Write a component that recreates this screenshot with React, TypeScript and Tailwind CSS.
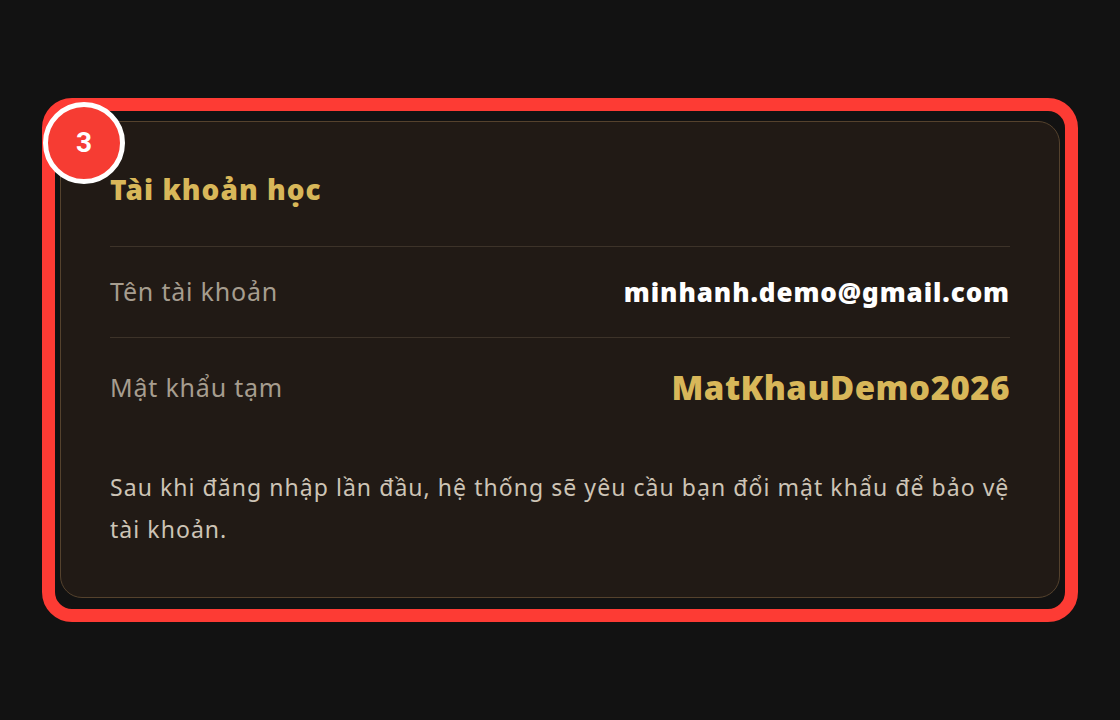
import React from "react";

const rows = [
  { label: "Tên tài khoản", value: "minhanh.demo@gmail.com", accent: false },
  { label: "Mật khẩu tạm", value: "MatKhauDemo2026", accent: true },
];

export default function App() {
  return (
    <div
      className="w-[1120px] h-[720px] bg-[#121212] flex items-center justify-center"
      style={{ fontFamily: '"Noto Sans", "Open Sans", sans-serif' }}
    >
      <div className="relative w-[1036px] h-[524px] rounded-[30px] border-[13px] border-[#fd3b34] px-[5px] pt-[10px] pb-[11px]">
        <div className="absolute -left-[12px] -top-[9px] w-[82px] h-[82px] rounded-full bg-[#f63c33] border-[5px] border-white flex items-center justify-center">
          <span className="text-white text-[28px] font-bold" style={{ fontFamily: "Roboto, sans-serif" }}>
            3
          </span>
        </div>

        <div className="h-full rounded-[22px] bg-[#211a15] border border-[#55422d] px-[49px] pt-[44px]">
          <h2 className="text-[28px] font-black tracking-[1px] text-[#d8b759] leading-[46px]">Tài khoản học</h2>

          <div className="mt-[34px] border-t border-[#3d3329]">
            {rows.map((row) => (
              <div
                key={row.label}
                className="flex items-center justify-between h-[91px] border-b border-[#3d3329] last:border-b-0 last:h-[100px]"
              >
                <span className="text-[25px] tracking-[0.8px] text-[#a69d8f]">{row.label}</span>
                <span
                  className={
                    row.accent
                      ? "text-[33px] font-black tracking-[0.5px] text-[#d8b759]"
                      : "text-[26px] font-black tracking-[0.9px] text-white"
                  }
                >
                  {row.value}
                </span>
              </div>
            ))}
          </div>

          <p className="mt-[28px] text-[23px] tracking-[1.05px] leading-[42px] text-[#cdc4b6]">
            Sau khi đăng nhập lần đầu, hệ thống sẽ yêu cầu bạn đổi mật khẩu để bảo vệ tài khoản.
          </p>
        </div>
      </div>
    </div>
  );
}
